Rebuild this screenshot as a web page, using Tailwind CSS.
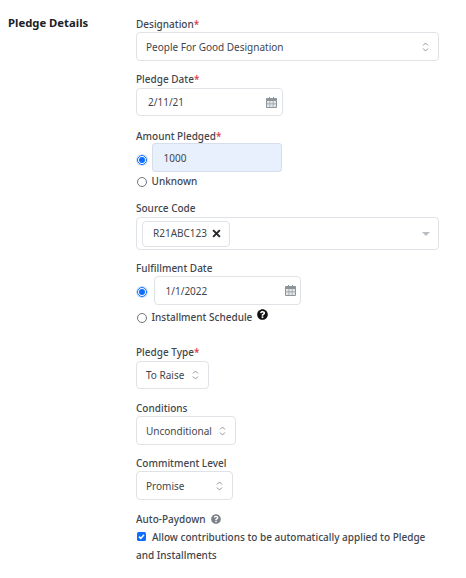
<!DOCTYPE html>
<html><head><meta charset="utf-8">
<script src="https://cdn.jsdelivr.net/npm/@tailwindcss/browser@4"></script>
</head>
<body class="bg-white">
<div class="w-[466px] h-[578px] overflow-hidden flex font-['Noto_Sans','Open_Sans',sans-serif] text-[10px] text-[#3f464d] antialiased">
  <div class="w-[136px] pl-2 pt-[15px] shrink-0 text-[11.3px] leading-4 font-bold text-[#1c2126]">Pledge Details</div>
  <div class="flex flex-col w-[303px] pt-[16px]">
    <div class="h-4 leading-4 font-medium">Designation<span class="text-[#dc3545]">*</span></div>
    <div class="h-[29px] w-[303px] flex items-center justify-between border border-[#dfe3e7] rounded-[4px] pl-[9px] pr-[9px]">
      <span class="pt-[1px]">People For Good Designation</span>
      <svg class="w-[7px] h-[12px]" viewBox="0 0 7 12" fill="none" stroke="#8d959c" stroke-width="1"><path d="M1 4.500 3.500 2 6 4.500M1 7.500 3.500 10 6 7.500"/></svg>
    </div>
    <div class="mt-[10px] h-4 leading-4 font-medium">Pledge Date<span class="text-[#dc3545]">*</span></div>
    <div class="mt-[1px] h-[28px] w-[147px] flex items-center justify-between border border-[#dfe3e7] rounded-[4px] pl-[11px] pr-[5px]">
      <span>2/11/21</span>
      <svg class="w-[11px] h-[11px]" viewBox="0 0 11 11"><path fill="#8d959c" d="M1 1h2V0h1v1h3V0h1v1h2a1 1 0 0 1 1 1v8a1 1 0 0 1-1 1H1a1 1 0 0 1-1-1V2a1 1 0 0 1 1-1Z"/><path fill="#e4e6e8" d="M1 4h2.600v2.600H1zM4.200 4h2.600v2.600H4.200zM7.400 4H10v2.600H7.400zM1 7.200h2.600V10H1zM4.200 7.200h2.600V10H4.200zM7.400 7.200H10V10H7.400z"/></svg>
    </div>
    <div class="mt-[12px] h-4 leading-4 font-medium">Amount Pledged<span class="text-[#dc3545]">*</span></div>
    <div class="flex items-center -mt-[1px]">
      <span class="w-[10px] h-[10px] mt-[4px] rounded-full border-[1.5px] border-[#0d6efd] flex items-center justify-center shadow-[0_0_0_1px_#cfe0fb] ml-[0.5px]"><span class="w-[6px] h-[6px] rounded-full bg-[#0d6efd]"></span></span>
      <div class="ml-[5px] h-[29px] w-[130px] flex items-center bg-[#e8f0fe] border border-[#d5deeb] rounded-[3px] pl-[11px] pt-[1px]">1000</div>
    </div>
    <div class="flex items-center h-4 mt-[1px]">
      <span class="w-[10px] h-[10px] mt-[1px] rounded-full border border-[#6c757d] ml-[0.5px]"></span>
      <span class="ml-[5px] font-medium leading-4">Unknown</span>
    </div>
    <div class="mt-[11px] h-4 leading-4 font-medium">Source Code</div>
    <div class="mt-[1px] h-[33px] w-[303px] flex items-center justify-between border border-[#dfe3e7] rounded-[4px] pl-[5px] pr-[8px]">
      <div class="h-[26px] w-[88px] flex items-center border border-[#dfe3e7] rounded-[4px] pl-[10px]">
        <span>R21ABC123</span>
        <svg class="w-[9px] h-[9px] ml-[5px]" viewBox="0 0 8 8" fill="none" stroke="#23282d" stroke-width="1.800"><path d="M1 1l6 6M7 1 1 7"/></svg>
      </div>
      <span class="w-0 h-0 border-x-[4px] border-x-transparent border-t-[4px] border-t-[#b8bdc2]"></span>
    </div>
    <div class="mt-[10px] h-4 leading-4 font-medium">Fulfillment Date</div>
    <div class="flex items-center">
      <span class="w-[10px] h-[10px] mt-[2px] rounded-full border-[1.5px] border-[#0d6efd] flex items-center justify-center shadow-[0_0_0_1px_#cfe0fb] ml-[0.5px]"><span class="w-[6px] h-[6px] rounded-full bg-[#0d6efd]"></span></span>
      <div class="ml-[7px] h-[29px] w-[147px] flex items-center justify-between border border-[#dfe3e7] rounded-[4px] pl-[11px] pr-[4px]">
        <span class="pt-[1px]">1/1/2022</span>
        <svg class="w-[11px] h-[11px]" viewBox="0 0 11 11"><path fill="#8d959c" d="M1 1h2V0h1v1h3V0h1v1h2a1 1 0 0 1 1 1v8a1 1 0 0 1-1 1H1a1 1 0 0 1-1-1V2a1 1 0 0 1 1-1Z"/><path fill="#e4e6e8" d="M1 4h2.600v2.600H1zM4.200 4h2.600v2.600H4.200zM7.400 4H10v2.600H7.400zM1 7.200h2.600V10H1zM4.200 7.200h2.600V10H4.200zM7.400 7.200H10V10H7.400z"/></svg>
      </div>
    </div>
    <div class="flex items-center mt-[4px] h-4">
      <span class="w-[10px] h-[10px] mt-[1px] rounded-full border border-[#6c757d] ml-[0.5px]"></span>
      <span class="ml-[5px] font-medium leading-4">Installment Schedule</span>
      <svg class="w-[11px] h-[11px] ml-[5px] mb-[5px]" viewBox="0 0 512 512"><path fill="#111" d="M504 256c0 137-111 248-248 248S8 393 8 256 119 8 256 8s248 111 248 248zM262.700 90c-54.500 0-89.300 23-116.500 63.800-3.500 5.300-2.400 12.400 2.700 16.300l34.700 26.300c5.200 3.900 12.600 3 16.700-2.100 17.900-22.700 30.100-35.800 57.300-35.800 20.400 0 45.700 13.100 45.700 33 0 15-12.400 22.700-32.600 34-23.600 13.200-54.800 29.700-54.800 70.900V300c0 6.600 5.400 12 12 12h56c6.600 0 12-5.400 12-12v-1.300c0-28.600 83.400-29.800 83.400-107.100C379.200 133.300 318.800 90 262.700 90zM256 339c-24 0-43.600 19.600-43.600 43.600 0 24 19.600 43.600 43.600 43.600s43.600-19.600 43.600-43.600c0-24-19.600-43.600-43.600-43.600z"/></svg>
    </div>
    <div class="mt-[19px] h-4 leading-4 font-medium">Pledge Type<span class="text-[#dc3545]">*</span></div>
    <div class="mt-[1px] h-[28px] w-[73px] flex items-center justify-between border border-[#dfe3e7] rounded-[4px] pl-[9px] pr-[9px]">
      <span class="pt-[1px]">To Raise</span>
      <svg class="w-[7px] h-[12px]" viewBox="0 0 7 12" fill="none" stroke="#8d959c" stroke-width="1"><path d="M1 4.500 3.500 2 6 4.500M1 7.500 3.500 10 6 7.500"/></svg>
    </div>
    <div class="mt-[11px] h-4 leading-4 font-medium">Conditions</div>
    <div class="h-[29px] w-[100px] flex items-center justify-between border border-[#dfe3e7] rounded-[4px] pl-[9px] pr-[9px]">
      <span class="pt-[1px]">Unconditional</span>
      <svg class="w-[7px] h-[12px]" viewBox="0 0 7 12" fill="none" stroke="#8d959c" stroke-width="1"><path d="M1 4.500 3.500 2 6 4.500M1 7.500 3.500 10 6 7.500"/></svg>
    </div>
    <div class="mt-[10px] h-4 leading-4 font-medium">Commitment Level</div>
    <div class="h-[29px] w-[97px] flex items-center justify-between border border-[#dfe3e7] rounded-[4px] pl-[9px] pr-[9px]">
      <span class="pt-[1px]">Promise</span>
      <svg class="w-[7px] h-[12px]" viewBox="0 0 7 12" fill="none" stroke="#8d959c" stroke-width="1"><path d="M1 4.500 3.500 2 6 4.500M1 7.500 3.500 10 6 7.500"/></svg>
    </div>
    <div class="mt-[11px] h-4 leading-4 font-medium flex items-center">Auto-Paydown
      <svg class="w-[10px] h-[10px] ml-[5px]" viewBox="0 0 512 512"><path fill="#7b8187" d="M504 256c0 137-111 248-248 248S8 393 8 256 119 8 256 8s248 111 248 248zM262.700 90c-54.500 0-89.300 23-116.500 63.800-3.500 5.300-2.400 12.400 2.700 16.300l34.700 26.300c5.200 3.900 12.600 3 16.700-2.100 17.900-22.700 30.100-35.800 57.300-35.800 20.400 0 45.700 13.100 45.700 33 0 15-12.400 22.700-32.600 34-23.600 13.200-54.800 29.700-54.800 70.900V300c0 6.600 5.400 12 12 12h56c6.600 0 12-5.400 12-12v-1.300c0-28.600 83.400-29.800 83.400-107.100C379.200 133.300 318.800 90 262.700 90zM256 339c-24 0-43.600 19.600-43.600 43.600 0 24 19.600 43.600 43.600 43.600s43.600-19.600 43.600-43.600c0-24-19.600-43.600-43.600-43.600z"/></svg>
    </div>
    <div class="mt-[1px] leading-[18px] font-medium w-[300px]">
      <svg class="inline-block w-[9px] h-[9px] ml-[1px] mr-[6px] mb-[3px] align-middle" viewBox="0 0 9 9"><rect width="9" height="9" rx="1.500" fill="#0d6efd"/><path d="M2 4.600 3.800 6.400 7 2.800" fill="none" stroke="#fff" stroke-width="1.500"/></svg>Allow contributions to be automatically applied to Pledge and Installments
    </div>
  </div>
</div>
</body></html>
